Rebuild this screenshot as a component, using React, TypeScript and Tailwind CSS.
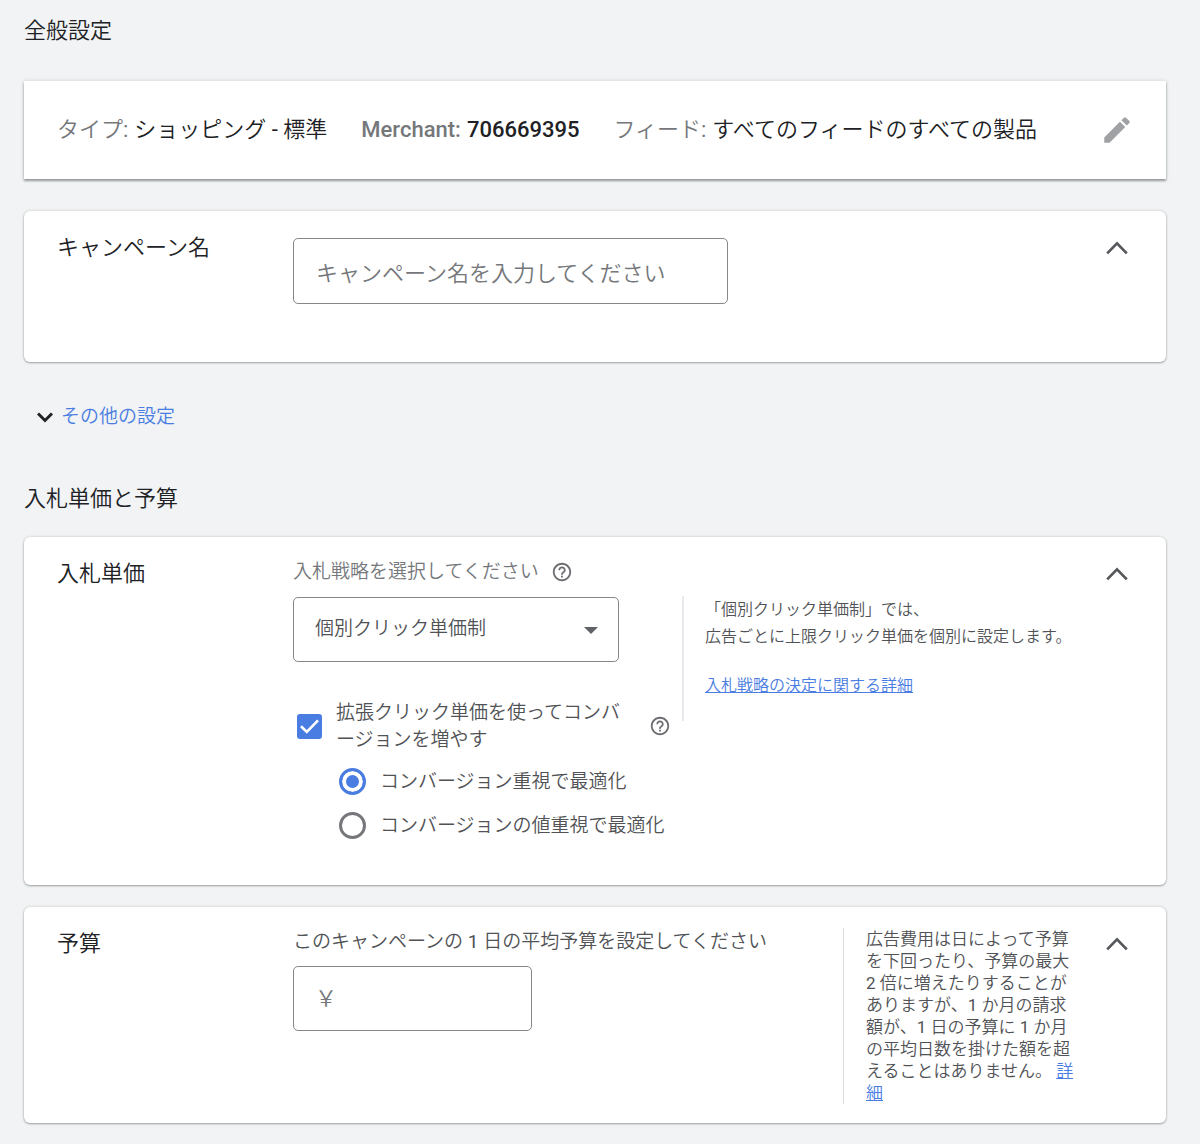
import { useState } from 'react'
import type { ReactNode } from 'react'
import clsx from 'clsx'
import { MdEdit, MdHelpOutline } from 'react-icons/md'

const fieldClass = 'rounded-[5px] border border-[#85878a] bg-white outline-none focus:border-[#4a7de2]'

const summary = [
  { label: 'タイプ:', value: 'ショッピング - 標準' },
  { label: 'Merchant:', value: '706669395', latin: true },
  { label: 'フィード:', value: 'すべてのフィードのすべての製品' },
]

const goals = [
  { id: 'conversions', label: 'コンバージョン重視で最適化' },
  { id: 'value', label: 'コンバージョンの値重視で最適化' },
]

export default function App() {
  return (
    <main className="min-h-screen bg-[#f1f3f4] pt-[17px] pr-[34px] pb-5 pl-6 font-['Roboto','Noto_Sans_CJK_JP_DemiLight','Noto_Sans_CJK_JP',sans-serif] text-[#202124]">
      <h2 className="mb-9 text-[22px] leading-7">全般設定</h2>

      <Summary />
      <CampaignName />

      <button className="mt-[43px] ml-[13px] flex items-center gap-2 text-[19px] leading-6 text-[#4a7de2]">
        <svg width="16" height="11" viewBox="0 0 16 11" fill="none" stroke="#202124" strokeWidth="3">
          <path d="M1 1.5l7 7 7-7" />
        </svg>
        その他の設定
      </button>

      <h2 className="mt-14 mb-6 text-[22px] leading-7">入札単価と予算</h2>

      <Bidding />
      <Budget />
    </main>
  )
}

function Summary() {
  return (
    <section className="flex min-h-[98px] items-center justify-between bg-white pr-8 pl-[33px] shadow-[0_2px_2px_rgba(60,64,67,0.45),0_0_4px_rgba(60,64,67,0.2)]">
      <dl className="flex flex-wrap gap-x-[34px] text-[22px] leading-7">
        {summary.map(item => (
          <div key={item.label} className={clsx('flex gap-[6px]', item.latin && 'font-medium')}>
            <dt className="text-[#75777b]">{item.label}</dt>
            <dd>{item.value}</dd>
          </div>
        ))}
      </dl>
      <button aria-label="編集" className="text-[#9fa1a4]">
        <MdEdit size={34} />
      </button>
    </section>
  )
}

function Panel({
  title,
  className,
  children,
}: {
  title: string
  className?: string
  children: ReactNode
}) {
  const [open, setOpen] = useState(true)

  return (
    <section
      className={clsx(
        'flex items-start rounded-[6px] bg-white pt-[21px] pr-[38px] pl-[33px] shadow-[0_1px_2px_rgba(60,64,67,0.4),0_0_3px_rgba(60,64,67,0.2)]',
        className,
      )}
    >
      <h3 className="mt-[2px] w-[236px] shrink-0 text-[22px] leading-7">{title}</h3>
      {open && <div className="flex min-w-0 flex-1 items-start">{children}</div>}
      <button
        aria-label={title}
        aria-expanded={open}
        onClick={() => setOpen(!open)}
        className="mt-[2px] ml-auto flex h-7 shrink-0 items-center"
      >
        <svg
          width="22"
          height="14"
          viewBox="0 0 22 14"
          fill="none"
          stroke="#55575b"
          strokeWidth="2.7"
          className={clsx(!open && 'rotate-180')}
        >
          <path d="M1.2 12.4L11 2.4l9.8 10" />
        </svg>
      </button>
    </section>
  )
}

function Help() {
  return (
    <button aria-label="ヘルプ" className="shrink-0 text-[#6b6d71]">
      <MdHelpOutline size={22} />
    </button>
  )
}

function CampaignName() {
  return (
    <Panel title="キャンペーン名" className="mt-8 pb-[58px]">
      <input
        type="text"
        aria-label="キャンペーン名"
        placeholder="キャンペーン名を入力してください"
        className={clsx(fieldClass, 'mt-[6px] h-[66px] w-[435px] px-[22px] pt-1 text-[22px] placeholder:text-[#75777b]')}
      />
    </Panel>
  )
}

function Bidding() {
  const [enhanced, setEnhanced] = useState(true)
  const [goal, setGoal] = useState('conversions')

  return (
    <Panel title="入札単価" className="pb-[46px]">
      <div className="mt-[2px] w-[389px] shrink-0 text-[19px] text-[#505256]">
        <div className="flex items-center gap-3 leading-6">
          <label htmlFor="strategy" className="text-[#75777b]">
            入札戦略を選択してください
          </label>
          <Help />
        </div>

        <div className="relative mt-[13px] w-[326px]">
          <select id="strategy" className={clsx(fieldClass, 'h-[65px] w-full appearance-none px-[21px]')}>
            <option>個別クリック単価制</option>
          </select>
          <svg
            width="14"
            height="7"
            viewBox="0 0 14 7"
            fill="#5f6368"
            className="pointer-events-none absolute top-[30px] right-[21px]"
          >
            <path d="M0 0h14L7 7z" />
          </svg>
        </div>

        <div className="mt-[37px] flex items-center">
          <span className="relative ml-1 size-[25px] shrink-0">
            <input
              id="enhanced"
              type="checkbox"
              checked={enhanced}
              onChange={e => setEnhanced(e.target.checked)}
              className="block size-full appearance-none rounded-[3px] border-2 border-[#6b6d71] checked:border-[#4a7de2] checked:bg-[#4a7de2]"
            />
            {enhanced && (
              <svg
                width="25"
                height="25"
                viewBox="0 0 25 25"
                fill="none"
                stroke="#fff"
                strokeWidth="2.6"
                className="pointer-events-none absolute inset-0"
              >
                <path d="M4 12.3l5.8 5.6L21 6.4" />
              </svg>
            )}
          </span>
          <label htmlFor="enhanced" className="ml-[14px] w-[290px] leading-[27px]">
            拡張クリック単価を使ってコンバージョンを増やす
          </label>
          <span className="ml-[23px] flex">
            <Help />
          </span>
        </div>

        <div className="mt-[15px] ml-[46px] flex flex-col gap-[17px]">
          {goals.map(item => (
            <label key={item.id} className="flex items-center gap-[14px] leading-[27px]">
              <input
                type="radio"
                name="goal"
                checked={goal === item.id}
                onChange={() => setGoal(item.id)}
                className="size-[27px] shrink-0 appearance-none rounded-full border-3 border-[#75777b] checked:border-[#4a7de2] checked:bg-[#4a7de2] checked:shadow-[inset_0_0_0_4px_#fff]"
              />
              {item.label}
            </label>
          ))}
        </div>
      </div>

      <div className="mt-[38px] border-l-2 border-[#e8eaed] pb-[22px] pl-[21px] text-[16px] leading-[27px] text-[#505256]">
        <p>
          「個別クリック単価制」では、
          <br />
          広告ごとに上限クリック単価を個別に設定します。
        </p>
        <p className="mt-[22px]">
          <a href="#bidding" className="text-[#4a7de2] underline">
            入札戦略の決定に関する詳細
          </a>
        </p>
      </div>
    </Panel>
  )
}

function Budget() {
  return (
    <Panel title="予算" className="mt-[22px] pb-[19px]">
      <div className="mt-[2px] flex-1 text-[19px] text-[#505256]">
        <label htmlFor="budget" className="block leading-6">
          このキャンペーンの 1 日の平均予算を設定してください
        </label>
        <input
          id="budget"
          type="text"
          placeholder="￥"
          className={clsx(fieldClass, 'mt-3 h-[65px] w-[239px] px-[21px] text-[22px] placeholder:text-[#75777b]')}
        />
      </div>

      <p className="mr-8 w-[231px] shrink-0 border-l border-[#dadce0] pl-[22px] text-[17px] leading-[22px] text-[#505256]">
        広告費用は日によって予算を下回ったり、予算の最大 2 倍に増えたりすることがありますが、1 か月の請求額が、1
        日の予算に 1 か月の平均日数を掛けた額を超えることはありません。{' '}
        <a href="#budget-help" className="text-[#4a7de2] underline">
          詳細
        </a>
      </p>
    </Panel>
  )
}
